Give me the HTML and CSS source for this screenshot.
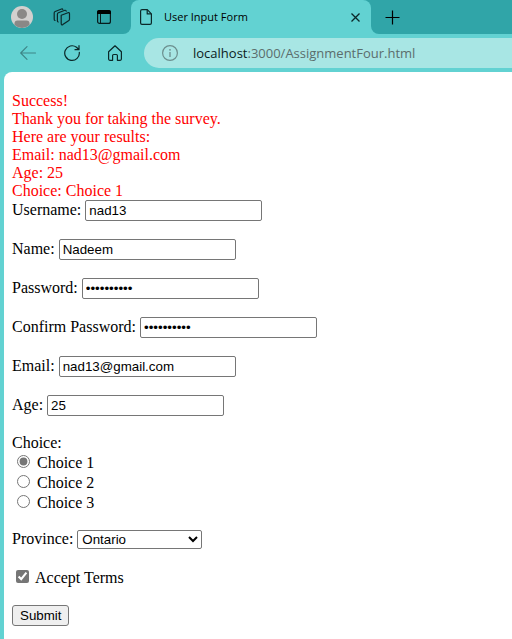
FILE: index.html
```html
<!DOCTYPE html>
<html lang="en">
<head>
<meta charset="utf-8">
<title>User Input Form</title>
<link rel="stylesheet" href="styles.css">
</head>
<body>
<header class="chrome">
  <div class="strip">
    <div class="strip-start">
      <button class="icon-button" type="button" aria-label="Profile">
        <svg width="22" height="22" viewBox="0 0 22 22"><circle cx="11" cy="11" r="11" fill="#d2d0ce"/><circle cx="11" cy="8" r="5" fill="#8a8886"/><path d="M3.500 19v-1.500q0-3 3-3h9q3 0 3 3V19a11 11 0 0 1-15 0z" fill="#8a8886"/></svg>
      </button>
      <button class="icon-button" type="button" aria-label="Workspaces">
        <svg width="18" height="18" viewBox="0 0 18 18" fill="none" stroke="#0b2829" stroke-width="1.200" stroke-linejoin="round" stroke-linecap="round"><path d="M8.200 7.200 15 4.700q1.500-.4 1.500 1v5.600q0 1-1 1.400l-5.700 3.900q-1.600.7-1.600-1z"/><path d="M5.200 14q-.8-.2-.8-1.200V6.200q0-1 1-1.400l6.500-2.500q1-.3 1.300.9"/><path d="M2 12.500q-.8-.2-.8-1.200V4.900q0-1 1-1.400L8.500 1q1-.3 1.300.4"/></svg>
      </button>
      <button class="icon-button" type="button" aria-label="Tab actions">
        <svg width="14" height="14" viewBox="0 0 14 14"><rect x=".6" y=".6" width="12.800" height="12.800" rx="2" fill="none" stroke="#071c1d" stroke-width="1.200"/><path d="M0 4V2Q0 0 2 0h10q2 0 2 2v2z" fill="#000"/><path d="M3.500 4v9.500" stroke="#071c1d"/></svg>
      </button>
    </div>
    <div class="tab-holder">
      <div class="tab">
        <svg width="12" height="16" viewBox="0 0 12 16" fill="none" stroke="#0b2829" stroke-width="1.200" stroke-linejoin="round"><path d="M2 .6h5.300l4.100 4.200V14q0 1.400-1.400 1.400H2Q.6 15.400.6 14V2Q.6.6 2 .6z"/><path d="M7.200.8v4.100h4"/></svg>
        <span class="tab-title">User Input Form</span>
        <button class="icon-button" type="button" aria-label="Close tab">
          <svg width="9" height="9" viewBox="0 0 9 9" stroke="#0b2829" stroke-width="1.300"><path d="m.5.5 8 8m0-8-8 8"/></svg>
        </button>
      </div>
    </div>
    <div class="strip-end">
      <button class="icon-button" type="button" aria-label="New tab">
        <svg width="15" height="15" viewBox="0 0 15 15" stroke="#000" stroke-width="1.200"><path d="M.5 7.500h14M7.500.5v14"/></svg>
      </button>
    </div>
  </div>
  <div class="toolbar">
    <div class="nav">
      <button class="icon-button" type="button" aria-label="Back">
        <svg width="16" height="14" viewBox="0 0 16 14" fill="none" stroke="#3d8486" stroke-width="1.100" stroke-linecap="round" stroke-linejoin="round"><path d="M15.500 7H.7M7 .7.700 7 7 13.300"/></svg>
      </button>
      <button class="icon-button" type="button" aria-label="Refresh">
        <svg width="16" height="16" viewBox="0 0 16 16" fill="none" stroke="#0b2829" stroke-width="1.200" stroke-linecap="round" stroke-linejoin="round"><path d="M15.300 7.300A7.300 7.300 0 1 1 12.500 2.300l2.300 2.200M15 .7v4h-4"/></svg>
      </button>
      <button class="icon-button" type="button" aria-label="Home">
        <svg width="14" height="16" viewBox="0 0 14 16" fill="none" stroke="#0b2829" stroke-width="1.200" stroke-linejoin="round"><path d="M.6 6.800 7 .8l6.400 6v7.300q0 1.200-1.200 1.200H9.400V10.500q0-1-1-1H5.600q-1 0-1 1v4.800H1.800q-1.200 0-1.200-1.200z"/></svg>
      </button>
    </div>
    <div class="address">
      <svg width="16" height="16" viewBox="0 0 16 16"><circle cx="8" cy="8" r="7.400" fill="none" stroke="#6c8f8e" stroke-width="1.200"/><path d="M8 7v5" stroke="#6c8f8e" stroke-width="1.300"/><circle cx="8" cy="4.800" r=".9" fill="#6c8f8e"/></svg>
      <span class="url"><span class="host">localhost</span>:3000/AssignmentFour.html</span>
    </div>
  </div>
</header>
<main class="page">
  <p class="result">Success!<br>Thank you for taking the survey.<br>Here are your results:<br>Email: nad13@gmail.com<br>Age: 25<br>Choice: Choice 1</p>
  <form class="form">
    <div class="field"><label for="username">Username:</label><input class="text" id="username" type="text" value="nad13"></div>
    <div class="field"><label for="name">Name:</label><input class="text" id="name" type="text" value="Nadeem"></div>
    <div class="field"><label for="password">Password:</label><input class="text" id="password" type="password" value="abcdefghij"></div>
    <div class="field"><label for="confirm">Confirm Password:</label><input class="text" id="confirm" type="password" value="abcdefghij"></div>
    <div class="field"><label for="email">Email:</label><input class="text" id="email" type="text" value="nad13@gmail.com"></div>
    <div class="field"><label for="age">Age:</label><input class="text" id="age" type="text" value="25"></div>
    <div class="choices" role="radiogroup" aria-labelledby="choice-title">
      <div id="choice-title">Choice:</div>
      <div class="option"><input class="tick" type="radio" name="choice" id="c1" checked><label for="c1">Choice 1</label></div>
      <div class="option"><input class="tick" type="radio" name="choice" id="c2"><label for="c2">Choice 2</label></div>
      <div class="option"><input class="tick" type="radio" name="choice" id="c3"><label for="c3">Choice 3</label></div>
    </div>
    <div class="field"><label for="province">Province:</label><select class="select" id="province"><option>Ontario</option></select></div>
    <div class="option"><input class="tick check" type="checkbox" id="terms" checked><label for="terms">Accept Terms</label></div>
    <button class="submit" type="submit">Submit</button>
  </form>
</main>
</body>
</html>
```
FILE: styles.css
```css
* {
  box-sizing: border-box;
}

body {
  margin: 0;
  min-height: 100vh;
  display: flex;
  flex-direction: column;
  background: #62d2d2;
  color: #000;
  font-family: "Liberation Serif", serif;
  font-size: 16px;
  line-height: 18px;
}

svg {
  display: block;
  flex: none;
}

.icon-button {
  padding: 0;
  border: 0;
  background: none;
}

.strip {
  display: flex;
  height: 34px;
}

.strip-start,
.strip-end {
  display: flex;
  align-items: center;
  background: #30a5a8;
}

.strip-start {
  flex: none;
  gap: 26px;
  padding: 0 20px 0 11px;
  border-bottom-right-radius: 8px;
}

.strip-start .icon-button:first-child {
  margin-right: -6px;
}

.strip-end {
  flex: 1;
  padding-left: 14px;
  border-bottom-left-radius: 8px;
}

.tab-holder {
  flex: 0 1 240px;
  background: #30a5a8;
}

.tab {
  display: flex;
  align-items: center;
  height: 100%;
  padding: 0 11px 0 9px;
  border-radius: 8px 8px 0 0;
  background: #62d2d2;
}

.tab-title {
  flex: 1;
  margin-left: 12px;
  font-family: "Open Sans", sans-serif;
  font-size: 11px;
}

.toolbar {
  display: flex;
  align-items: center;
  height: 38px;
  padding-left: 20px;
}

.nav {
  display: flex;
  align-items: center;
  gap: 28px;
  margin-right: 22px;
}

.address {
  flex: 1;
  display: flex;
  align-items: center;
  gap: 15px;
  height: 30px;
  padding-left: 18px;
  border-radius: 15px 0 0 15px;
  background: #a8e6e4;
}

.url {
  color: #5b6d6c;
  font-family: "Open Sans", sans-serif;
  font-size: 13px;
}

.host {
  color: #0b1c1c;
}

.page {
  flex: 1;
  margin-left: 4px;
  padding: 20px 8px 13px;
  border-top-left-radius: 8px;
  background: #fff;
}

.result {
  margin: 0;
  color: #f00;
}

.form {
  display: flex;
  flex-direction: column;
  align-items: flex-start;
  gap: 18px;
}

.field {
  display: flex;
  align-items: baseline;
  gap: 4px;
}

.text,
.select,
.submit {
  margin: 0;
  border: 1px solid #767676;
  border-radius: 2px;
  color: #000;
  font-family: "Liberation Sans", sans-serif;
}

.text {
  width: 177px;
  height: 21px;
  padding: 1px 3px;
  background: #fff;
}

.select {
  width: 125px;
  height: 19px;
  background: #fff;
}

.option {
  display: flex;
  align-items: center;
  gap: 7px;
  height: 20px;
  padding: 2px 0 0 5px;
}

.tick {
  width: 13px;
  height: 13px;
  margin: 0 0 3px;
  accent-color: #767676;
}

.check {
  margin: 0 -1px 3px;
}

.submit {
  height: 21px;
  padding: 1px 7px;
  border-radius: 3px;
  background: #efefef;
}
```
